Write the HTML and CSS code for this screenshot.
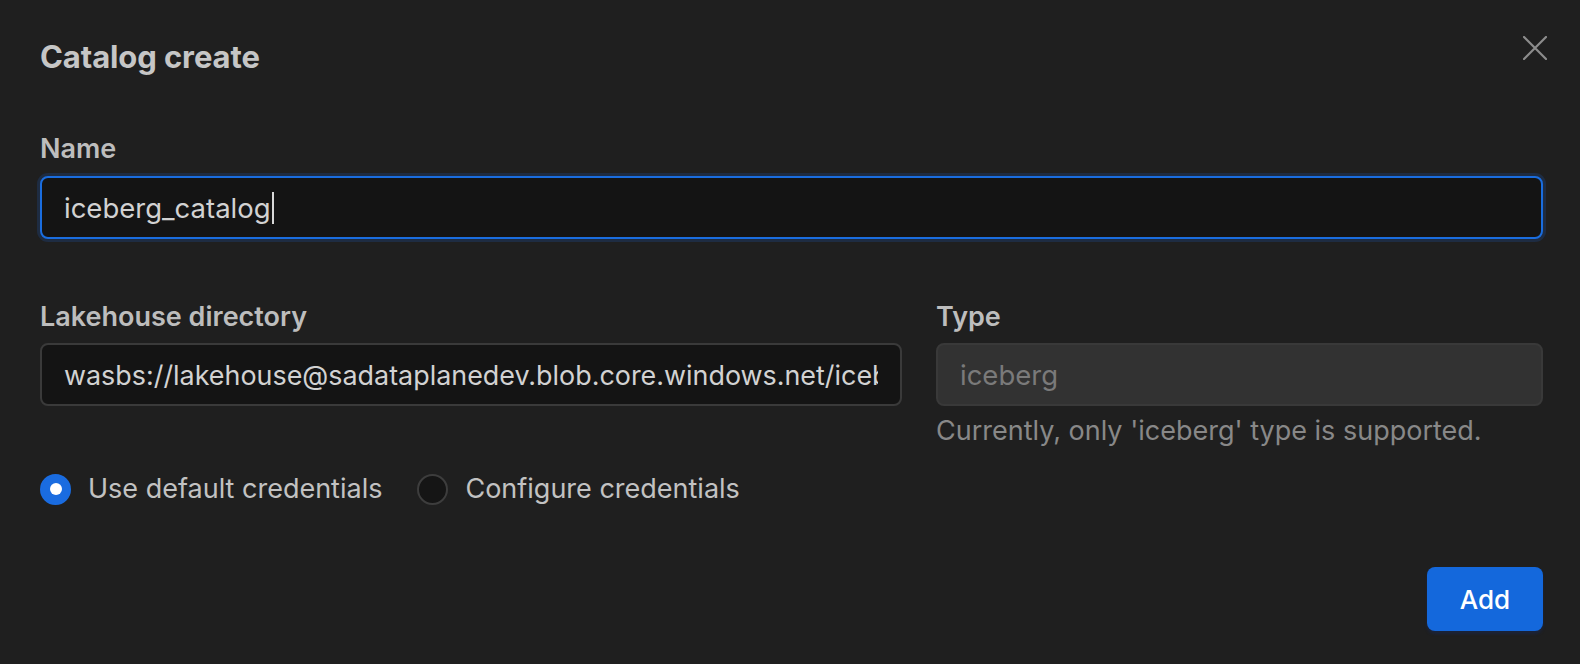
FILE: index.html
```html
<!DOCTYPE html>
<html lang="en">
<head>
<meta charset="utf-8">
<title>Catalog create</title>
<link rel="stylesheet" href="styles.css">
</head>
<body>
<div class="modal">
  <header class="modal-header">
    <h2 class="modal-title">Catalog create</h2>
    <button class="close-btn" aria-label="Close">
      <svg width="24" height="24" viewBox="0 0 24 24"><path d="M1 1 L23 23 M23 1 L1 23" stroke="#8c8c8c" stroke-width="2.2" stroke-linecap="round" fill="none"/></svg>
    </button>
  </header>

  <div class="field field-name">
    <label class="label">Name</label>
    <div class="input input-focus"><span class="value">iceberg_catalog</span><span class="caret"></span></div>
  </div>

  <div class="row">
    <div class="field">
      <label class="label">Lakehouse directory</label>
      <div class="input"><span class="value clip">wasbs://lakehouse@sadataplanedev.blob.core.windows.net/iceberg</span></div>
    </div>
    <div class="field">
      <label class="label">Type</label>
      <div class="input input-disabled"><span class="value">iceberg</span></div>
      <div class="helper">Currently, only 'iceberg' type is supported.</div>
    </div>
  </div>

  <div class="radios">
    <label class="radio"><span class="dot checked"></span><span class="radio-text">Use default credentials</span></label>
    <label class="radio"><span class="dot"></span><span class="radio-text">Configure credentials</span></label>
  </div>

  <footer class="footer">
    <button class="btn-primary">Add</button>
  </footer>
</div>
</body>
</html>
```

FILE: styles.css
```css
* { box-sizing: border-box; }
html, body {
  margin: 0;
  padding: 0;
  background: #1f1f1f;
  height: 100%;
}
body {
  font-family: Inter, "Noto Sans", "Liberation Sans", sans-serif;
  color: #c4c4c4;
}
.modal {
  position: relative;
  padding: 39px 37px 0 40px;
}
.modal-header {
  display: flex;
  align-items: center;
}
.modal-title {
  margin: 0;
  font-size: 31px;
  line-height: 36px;
  font-weight: 700;
  color: #c6c6c6;
  letter-spacing: -0.1px;
}
.close-btn {
  position: absolute;
  top: 36px;
  right: 33px;
  width: 24px;
  height: 24px;
  padding: 0;
  border: 0;
  background: none;
  display: flex;
}
.field {
  display: flex;
  flex-direction: column;
  min-width: 0;
}
.field-name {
  margin-top: 58px;
}
.label {
  font-size: 27px;
  line-height: 32px;
  font-weight: 600;
  color: #bdbdbd;
  margin-bottom: 11px;
}
.row .label { margin-bottom: 10px; }
.input {
  height: 63px;
  border: 2px solid #3a3a3a;
  border-radius: 8px;
  background: #141414;
  display: flex;
  align-items: center;
  padding: 0 22px 0 22px;
  overflow: hidden;
  min-width: 0;
}
.input-focus {
  border-color: #1a6ddf;
  box-shadow: 0 0 0 3px rgba(26, 90, 190, 0.22);
}
.input-disabled {
  background: #323232;
  border-color: #393939;
}
.value {
  font-size: 27.5px;
  color: #d2d2d2;
  white-space: nowrap;
}
.clip {
  overflow: hidden;
  display: block;
  width: 100%;
  font-size: 26.9px;
}
.input-disabled .value { color: #7a7a7a; }
.caret {
  display: inline-block;
  width: 2px;
  height: 32px;
  background: #d8d8d8;
  margin-left: 1px;
}
.row {
  margin-top: 62px;
  display: grid;
  grid-template-columns: minmax(0, 862fr) minmax(0, 607fr);
  column-gap: 34px;
}
.helper {
  margin-top: 9px;
  font-size: 27px;
  line-height: 32px;
  color: #888888;
}
.radios {
  margin-top: 26px;
  display: flex;
  align-items: center;
  gap: 35px;
}
.radio {
  display: flex;
  align-items: center;
  gap: 17px;
}
.dot {
  width: 31px;
  height: 31px;
  border-radius: 50%;
  border: 2px solid #3d3d3d;
  background: #151515;
  display: flex;
  align-items: center;
  justify-content: center;
}
.dot.checked {
  background: #1a6ce0;
  border-color: #1a6ce0;
}
.dot.checked::after {
  content: "";
  width: 12px;
  height: 12px;
  border-radius: 50%;
  background: #ffffff;
}
.radio-text {
  font-size: 27px;
  line-height: 32px;
  color: #c2c2c2;
}
.footer {
  margin-top: 62px;
  display: flex;
  justify-content: flex-end;
}
.btn-primary {
  width: 116px;
  height: 64px;
  border: 0;
  border-radius: 8px;
  background: #1468dc;
  color: #ffffff;
  font-family: Inter, "Noto Sans", "Liberation Sans", sans-serif;
  font-size: 26px;
  font-weight: 500;
  box-shadow: 0 3px 3px rgba(20, 40, 90, 0.45);
}
```
